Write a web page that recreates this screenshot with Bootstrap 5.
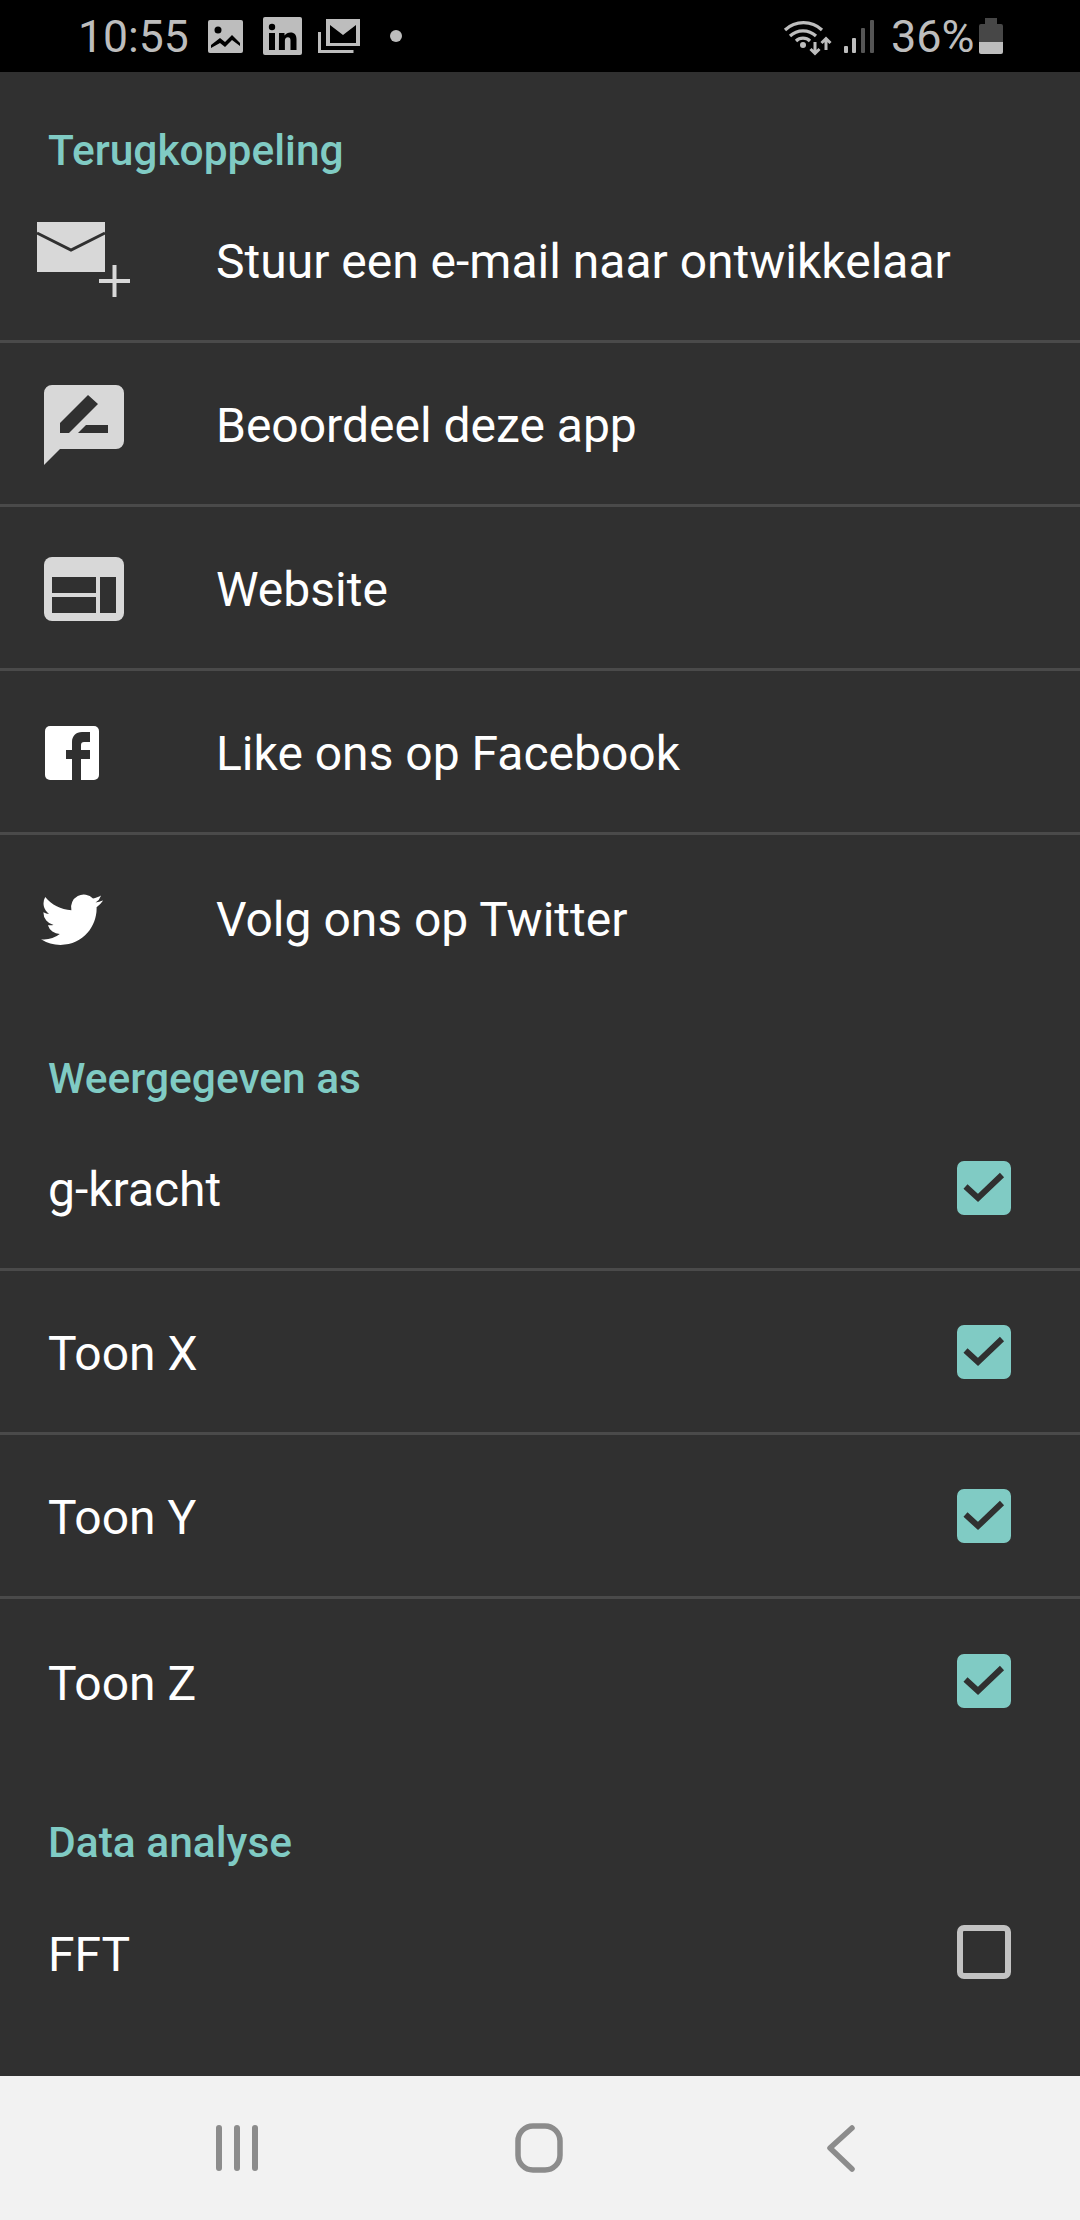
<!DOCTYPE html>
<html lang="nl">
<head>
  <meta charset="UTF-8">
  <title>Instellingen</title>
  <meta name="viewport" content="width=device-width, initial-scale=1.0">
  <link href="https://cdn.jsdelivr.net/npm/bootstrap@5.3.0/dist/css/bootstrap.min.css" rel="stylesheet">
  <style>
    html, body { height: 100%; }
    body {
      background: #303030;
      font-family: Roboto, "Liberation Sans", sans-serif;
      overflow: hidden;
    }
    .app-shell { height: 2220px; }
    svg { display: block; flex-shrink: 0; }

    .status-strip {
      height: 72px;
      background: #000;
      color: #bdbdbd;
      font-size: 44.5px;
      line-height: 72px;
      padding-left: 78px;
    }
    .status-time { width: 120px; padding-top: 1px; }
    .status-left-icons { width: 210px; height: 44px; }
    .status-net { width: 100px; height: 44px; margin-left: 372px; }
    .status-pct { width: 84px; margin-left: 11px; padding-top: 1px; font-size: 45px; }
    .status-batt { width: 30px; height: 44px; margin-left: 1px; }

    .pref-head {
      color: #80cbc4;
      font-size: 42.5px;
      font-weight: 500;
      line-height: 40px;
      padding-left: 48px;
    }
    .head-a { padding-top: 59px; padding-bottom: 8px; }
    .head-b { padding-top: 60px; padding-bottom: 8px; }
    .head-c { padding-top: 60px; padding-bottom: 7px; }

    .pref-list { --bs-list-group-bg: transparent; border-radius: 0; }
    .pref-row {
      height: 164px;
      background: transparent;
      border: 0;
      border-bottom: 3px solid #4a4a4a;
      border-radius: 0;
      padding: 0 69px 0 48px;
      color: #fff;
      font-size: 48px;
      line-height: 56px;
    }
    .pref-row:last-child { border-bottom: 0; }
    .pref-row.has-icon { padding-left: 30px; }
    .pref-icon { width: 130px; height: 100px; margin-right: 56px; }
    .pref-label { padding-top: 5px; }

    .pref-check.form-check-input {
      width: 54px;
      height: 54px;
      margin: 0;
      flex-shrink: 0;
      border-radius: 7px;
      border: 6px solid #c2c2c2;
      background-color: transparent;
      box-shadow: none;
    }
    .pref-check.form-check-input:checked {
      border-color: #80cbc4;
      background-color: #80cbc4;
      background-size: 54px 54px;
      background-position: center;
      background-image: url("data:image/svg+xml,%3Csvg xmlns='http://www.w3.org/2000/svg' viewBox='0 0 54 54'%3E%3Cpath d='M8.5 25.5 21 37 45 14' fill='none' stroke='%23303030' stroke-width='6'/%3E%3C/svg%3E");
    }

    .softkeys {
      height: 144px;
      background: #f2f2f2;
      padding-left: 86px;
    }
    .softkey { width: 302px; }
  </style>
</head>
<body>
  <div class="app-shell d-flex flex-column">
    <div class="status-strip d-flex align-items-center">
      <span class="status-time">10:55</span>
      <svg class="status-left-icons" viewBox="198 14 210 44">
        <rect x="208" y="20" width="35" height="33" rx="2" fill="#bdbdbd"/>
        <circle cx="218" cy="30" r="3.500" fill="#000"/>
        <path d="M211 45l9-7 5 4 7-7 8 8v3l-8-6-7 7-5-4-9 5z" fill="#000"/>
        <rect x="263" y="17" width="39" height="38" rx="2" fill="#bdbdbd"/>
        <circle cx="272" cy="27" r="3.200" fill="#000"/>
        <rect x="269" y="33" width="6" height="17" fill="#000"/>
        <path d="M279 33h5.500v2.500c1.500-2 3.500-3 6-3 4 0 6 2.500 6 7V50h-6V40.500c0-2.200-.8-3.300-2.600-3.300-1.900 0-3 1.300-3 3.500V50h-6z" fill="#000"/>
        <path d="M326 19h34v27h-34zM330 25v18h26V25l-13 10z" fill="#bdbdbd" fill-rule="evenodd"/>
        <path d="M319.500 32v19.500h34" fill="none" stroke="#bdbdbd" stroke-width="3"/>
        <circle cx="396" cy="36" r="6" fill="#bdbdbd"/>
      </svg>
      <svg class="status-net" viewBox="780 14 100 44">
        <g fill="none" stroke="#bdbdbd" stroke-width="3.200">
          <path d="M785 30a27 27 0 0 1 37 0"/>
          <path d="M790 36a19 19 0 0 1 26 0"/>
          <path d="M796 41a10 10 0 0 1 14 0"/>
        </g>
        <circle cx="803" cy="45" r="3" fill="#bdbdbd"/>
        <path d="M815 42v11M810.500 49l4.500 4.500 4.500-4.500M826 50V39M821.500 43l4.500-4.500 4.500 4.500" fill="none" stroke="#bdbdbd" stroke-width="3"/>
        <rect x="844" y="46" width="4" height="7" rx="1" fill="#bdbdbd"/>
        <rect x="852" y="38" width="4" height="15" rx="1" fill="#bdbdbd"/>
        <rect x="861" y="28" width="4" height="25" rx="1" fill="#555"/>
        <rect x="870" y="20" width="4" height="33" rx="1" fill="#555"/>
      </svg>
      <span class="status-pct">36%</span>
      <svg class="status-batt" viewBox="976 14 30 44">
        <path d="M985 18h12v6h4a2 2 0 0 1 2 2v16h-24V26a2 2 0 0 1 2-2h4z" fill="#474747"/>
        <path d="M979 42h24v10a2 2 0 0 1-2 2h-20a2 2 0 0 1-2-2z" fill="#bdbdbd"/>
      </svg>
    </div>

    <div class="pref-head head-a">Terugkoppeling</div>
    <div class="list-group pref-list">
      <a class="list-group-item pref-row has-icon d-flex align-items-center">
        <svg class="pref-icon" viewBox="30 210 130 100">
          <rect x="37" y="222" width="68" height="50" fill="#d8d8d8"/>
          <path d="M37 233l34 17 34-17" fill="none" stroke="#303030" stroke-width="3"/>
          <path d="M114.500 265v32M99 281h31" stroke="#d8d8d8" stroke-width="4"/>
        </svg>
        <span class="pref-label">Stuur een e-mail naar ontwikkelaar</span>
      </a>
      <a class="list-group-item pref-row has-icon d-flex align-items-center">
        <svg class="pref-icon" viewBox="30 373 130 100">
          <path d="M52 384h64a8 8 0 0 1 8 8v48a8 8 0 0 1-8 8H60l-16 16V392a8 8 0 0 1 8-8z" fill="#d8d8d8"/>
          <path d="M60 422l28-28 10 9-29 29h-9zM78 432l8-8h22v8z" fill="#303030"/>
        </svg>
        <span class="pref-label">Beoordeel deze app</span>
      </a>
      <a class="list-group-item pref-row has-icon d-flex align-items-center">
        <svg class="pref-icon" viewBox="30 537 130 100">
          <path d="M52 556h64a8 8 0 0 1 8 8v48a8 8 0 0 1-8 8H52a8 8 0 0 1-8-8v-48a8 8 0 0 1 8-8z" fill="#d8d8d8"/>
          <path d="M52 576h44v16H52zM52 596h44v16H52zM100 576h16v36h-16z" fill="#303030"/>
        </svg>
        <span class="pref-label">Website</span>
      </a>
      <a class="list-group-item pref-row has-icon d-flex align-items-center">
        <svg class="pref-icon" viewBox="30 701 130 100">
          <rect x="45" y="725" width="54" height="54" rx="5" fill="#fff"/>
          <path d="M72 779v-21h-6v-9h6v-8c0-6 4-10 10-10h8v10h-6c-2 0-3 1-3 3v5h9v9h-9v21z" fill="#303030"/>
        </svg>
        <span class="pref-label">Like ons op Facebook</span>
      </a>
      <a class="list-group-item pref-row has-icon d-flex align-items-center">
        <svg class="pref-icon" viewBox="30 865 130 100">
          <path transform="translate(41 886.800) scale(2.580)" fill="#fff" d="M23.953 4.570a10 10 0 0 1-2.825.775 4.958 4.958 0 0 0 2.163-2.723c-.951.555-2.005.959-3.127 1.184a4.920 4.920 0 0 0-8.384 4.482C7.690 8.095 4.067 6.130 1.640 3.162a4.822 4.822 0 0 0-.666 2.475c0 1.710.870 3.213 2.188 4.096a4.904 4.904 0 0 1-2.228-.616v.060a4.923 4.923 0 0 0 3.946 4.827 4.996 4.996 0 0 1-2.212.085 4.936 4.936 0 0 0 4.604 3.417 9.867 9.867 0 0 1-6.102 2.105c-.390 0-.779-.023-1.170-.067a13.995 13.995 0 0 0 7.557 2.209c9.053 0 13.998-7.496 13.998-13.985 0-.210 0-.420-.015-.630A9.935 9.935 0 0 0 24 4.590z"/>
        </svg>
        <span class="pref-label">Volg ons op Twitter</span>
      </a>
    </div>

    <div class="pref-head head-b">Weergegeven as</div>
    <div class="list-group pref-list">
      <label class="list-group-item pref-row d-flex align-items-center justify-content-between">
        <span class="pref-label">g-kracht</span><input class="form-check-input pref-check" type="checkbox" checked>
      </label>
      <label class="list-group-item pref-row d-flex align-items-center justify-content-between">
        <span class="pref-label">Toon X</span><input class="form-check-input pref-check" type="checkbox" checked>
      </label>
      <label class="list-group-item pref-row d-flex align-items-center justify-content-between">
        <span class="pref-label">Toon Y</span><input class="form-check-input pref-check" type="checkbox" checked>
      </label>
      <label class="list-group-item pref-row d-flex align-items-center justify-content-between">
        <span class="pref-label">Toon Z</span><input class="form-check-input pref-check" type="checkbox" checked>
      </label>
    </div>

    <div class="pref-head head-c">Data analyse</div>
    <div class="list-group pref-list">
      <label class="list-group-item pref-row d-flex align-items-center justify-content-between">
        <span class="pref-label">FFT</span><input class="form-check-input pref-check" type="checkbox">
      </label>
    </div>

    <div class="softkeys d-flex align-items-center mt-auto">
      <div class="softkey d-flex justify-content-center">
        <svg width="48" height="50" viewBox="0 0 48 50">
          <path d="M6 5v40M24 5v40M42 5v40" stroke="#8c8c8c" stroke-width="6" stroke-linecap="round"/>
        </svg>
      </div>
      <div class="softkey d-flex justify-content-center">
        <svg width="48" height="50" viewBox="0 0 48 50">
          <rect x="3" y="3" width="42" height="44" rx="15" fill="none" stroke="#8c8c8c" stroke-width="5.500"/>
        </svg>
      </div>
      <div class="softkey d-flex justify-content-center">
        <svg width="30" height="50" viewBox="0 0 30 50">
          <path d="M26 5 4 25l22 21" fill="none" stroke="#8c8c8c" stroke-width="5.500" stroke-linecap="round" stroke-linejoin="round"/>
        </svg>
      </div>
    </div>
  </div>
  <script src="https://cdn.jsdelivr.net/npm/bootstrap@5.3.0/dist/js/bootstrap.bundle.min.js"></script>
</body>
</html>
